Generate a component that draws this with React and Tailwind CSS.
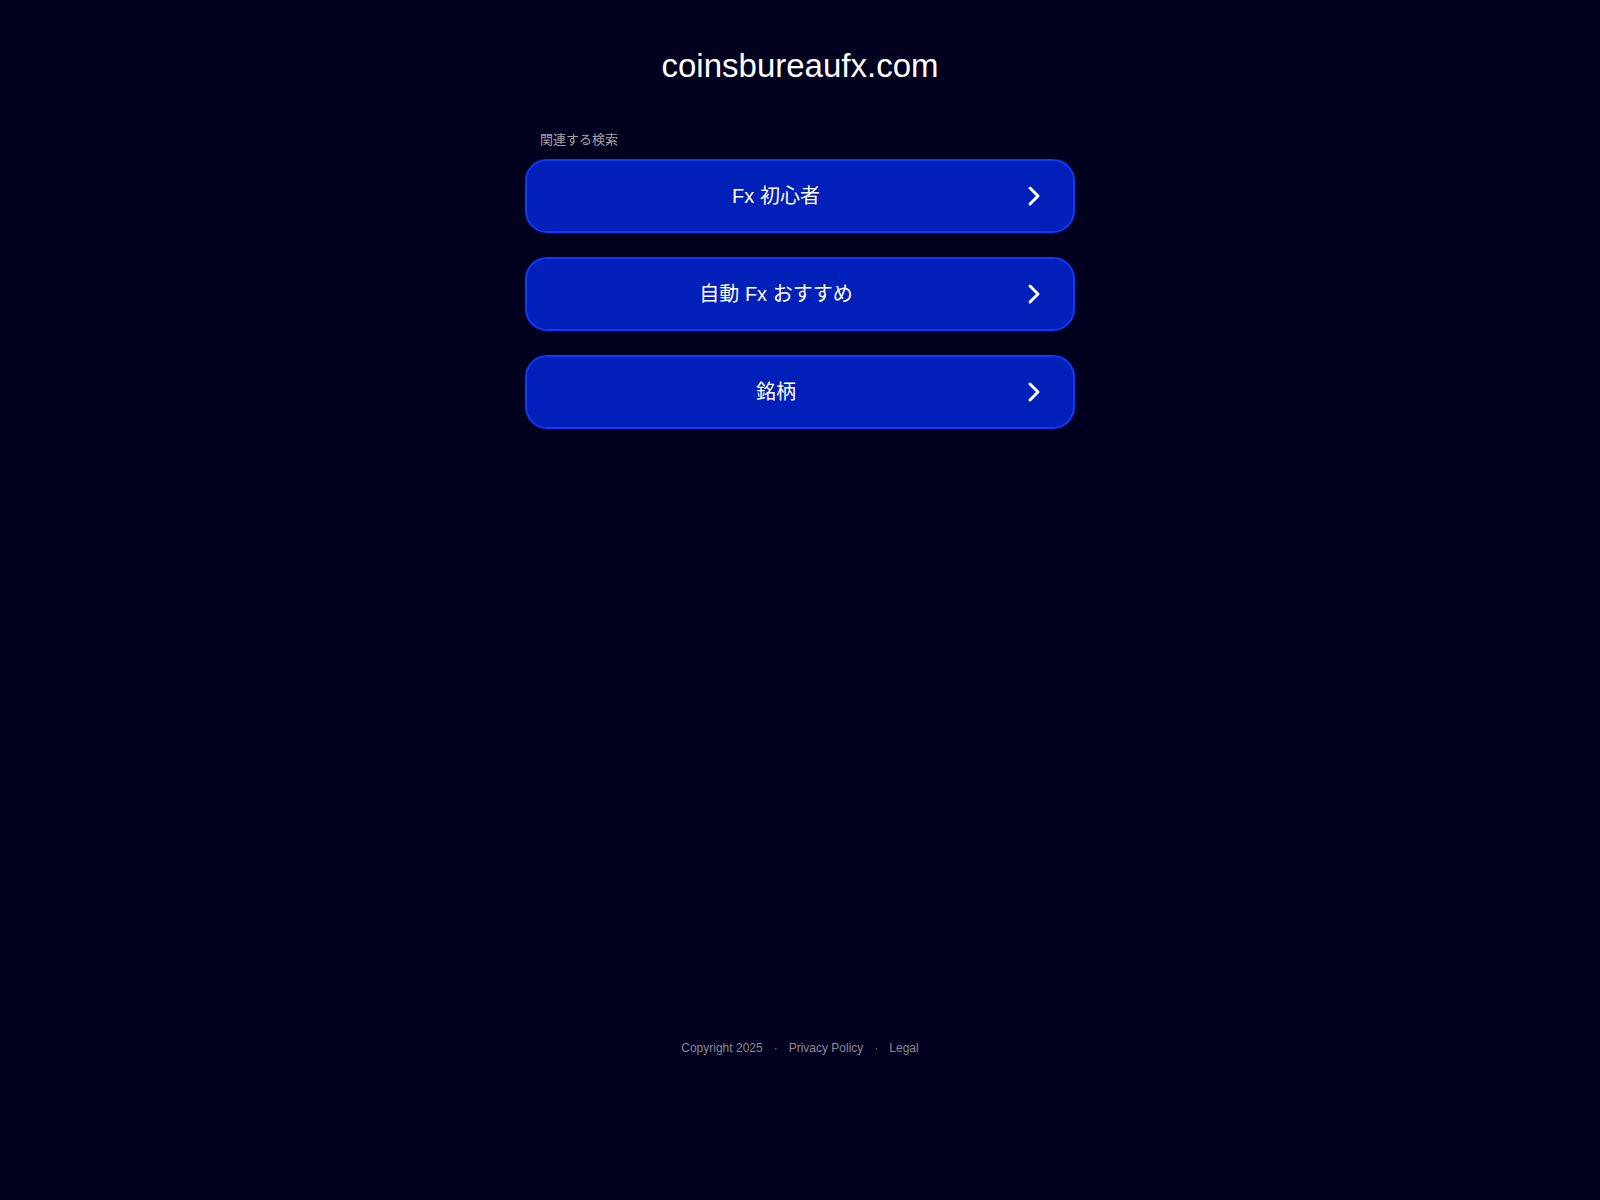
import React from 'react';

const searches = ['Fx 初心者', '自動 Fx おすすめ', '銘柄'];

const Chevron = () => (
  <svg width="16" height="22" viewBox="0 0 16 22" fill="none">
    <path d="M4 3 L12 11 L4 19" stroke="white" strokeWidth="3" strokeLinecap="round" strokeLinejoin="round" />
  </svg>
);

export default function App() {
  return (
    <div
      className="min-h-[1200px] bg-[#01011f] text-white flex flex-col items-center"
      style={{ fontFamily: '"Liberation Sans", Arial, "Noto Sans CJK JP", sans-serif' }}
    >
      {/* --- Header --- */}
      <h1 className="mt-[46px] text-[33px] leading-[40px] font-normal">coinsbureaufx.com</h1>

      {/* --- Related searches --- */}
      <div className="mt-[46px] w-[550px]">
        <p className="pl-[15px] text-[13px] leading-[16px] text-[#a3a3a8]">関連する検索</p>
        <div className="mt-[11px] flex flex-col gap-[24px]">
          {searches.map((s) => (
            <a
              key={s}
              href="#"
              className="flex items-center h-[74px] rounded-[22px] bg-[#0020b9] border-2 border-[#0a3dfb] pl-[20px] pr-[20px]"
            >
              <span className="flex-1 text-center text-[20px] leading-[24px] text-white">{s}</span>
              <span className="w-[48px] pl-[10px] flex justify-center">
                <Chevron />
              </span>
            </a>
          ))}
        </div>
      </div>

      {/* --- Footer --- */}
      <div className="mt-[612px] flex items-center gap-[11px] text-[12px] leading-[14px] text-[#8a8a94]">
        <span>Copyright 2025</span>
        <span>·</span>
        <span>Privacy Policy</span>
        <span>·</span>
        <span>Legal</span>
      </div>
    </div>
  );
}
